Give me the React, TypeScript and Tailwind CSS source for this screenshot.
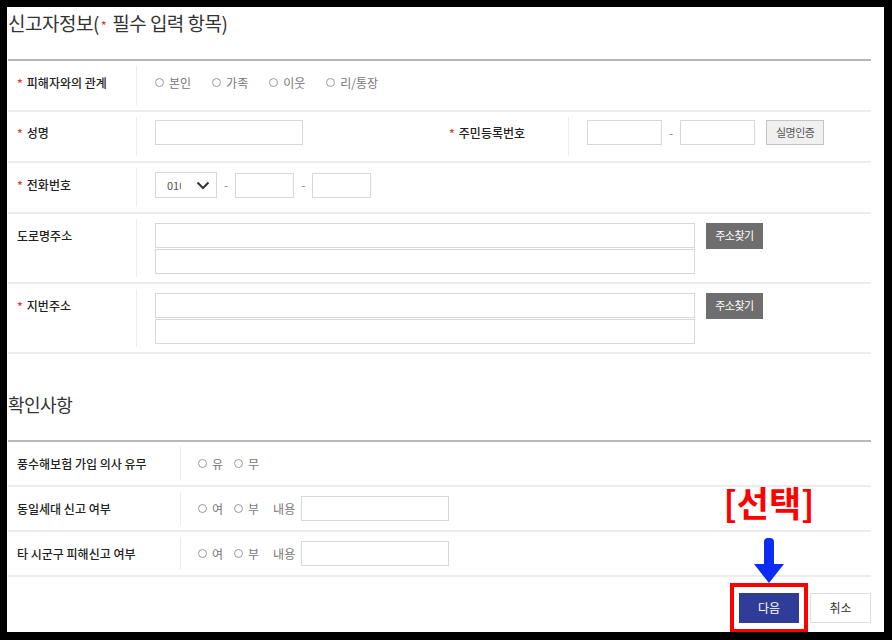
import React from "react";

const Star = () => <span className="text-[#e8382f] text-[12px] mr-[4px]">*</span>;

const Radio = ({ label }: { label: string }) => (
  <span className="flex items-center gap-[5px] text-[12px] text-[#777]">
    <span className="w-[9px] h-[9px] rounded-full border border-[#999]" />
    {label}
  </span>
);

const Label = ({ text, required }: { text: string; required?: boolean }) => (
  <div className="flex items-center h-[25px] pl-[9px] text-[12px] text-[#222] font-medium">
    {required && <Star />}
    {text}
  </div>
);

const Divider = () => <div className="w-px self-stretch my-[5px] bg-[#ececec]" />;

const Input = ({ w }: { w: string }) => <div className={`${w} h-[25px] border border-[#d8d8d8] bg-white`} />;

const Dash = () => <span className="text-[12px] text-[#888] px-[7px]">-</span>;

const FindBtn = () => (
  <div className="w-[57px] h-[26px] bg-[#6e6e6e] text-white text-[11px] flex justify-center pt-[4px] tracking-[-0.5px]">
    주소찾기
  </div>
);

export default function App() {
  return (
    <div className="w-[892px] h-[640px] bg-black pt-[7px] pl-[7px] font-['Noto_Sans_CJK_KR',sans-serif]">
      <div className="w-[877px] h-[625px] bg-white overflow-hidden">
        <div className="w-[863px] ml-[1px]">
          {/* title */}
          <div className="h-[52px] pt-[2px] text-[19px] leading-[28px] text-[#333] tracking-[-0.5px]">
            신고자정보(<span className="text-[#e8382f] text-[13px] mx-[2px]">*</span> 필수 입력 항목)
          </div>

          {/* table 1 */}
          <div className="border-t-2 border-[#b8b8b8]">
            <div className="flex h-[51px] border-b-2 border-[#ececec]">
              <div className="w-[128px] pt-[9px]"><Label text="피해자와의 관계" required /></div>
              <Divider />
              <div className="flex-1 pt-[9px] pl-[18px] flex items-start">
                <div className="h-[25px] flex items-center gap-[21px]">
                  <Radio label="본인" />
                  <Radio label="가족" />
                  <Radio label="이웃" />
                  <Radio label="리/통장" />
                </div>
              </div>
            </div>

            <div className="flex h-[51px] border-b-2 border-[#ececec]">
              <div className="w-[128px] pt-[8px]"><Label text="성명" required /></div>
              <Divider />
              <div className="w-[303px] pt-[8px] pl-[18px]"><Input w="w-[148px]" /></div>
              <div className="w-[128px] pt-[8px]"><Label text="주민등록번호" required /></div>
              <Divider />
              <div className="flex-1 pt-[8px] pl-[18px] flex items-start">
                <div className="flex items-center">
                  <Input w="w-[75px]" />
                  <Dash />
                  <Input w="w-[75px]" />
                  <div className="ml-[11px] w-[58px] h-[25px] bg-[#f0f0f0] border border-[#c4c4c4] text-[11px] text-[#555] flex items-center justify-center tracking-[-0.5px]">
                    실명인증
                  </div>
                </div>
              </div>
            </div>

            <div className="flex h-[51px] border-b-2 border-[#ececec]">
              <div className="w-[128px] pt-[9px]"><Label text="전화번호" required /></div>
              <Divider />
              <div className="flex-1 pt-[9px] pl-[18px] flex items-start">
                <div className="flex items-center">
                  <div className="w-[62px] h-[26px] border border-[#d8d8d8] flex items-center pl-[11px] pr-[6px]">
                    <span className="w-[14px] overflow-hidden whitespace-nowrap text-[11px] text-[#555]">010</span>
                    <svg className="ml-auto" width="14" height="9" viewBox="0 0 14 9">
                      <path d="M1.5 1.5 L7 7 L12.5 1.5" fill="none" stroke="#333" strokeWidth="2" />
                    </svg>
                  </div>
                  <Dash />
                  <Input w="w-[59px]" />
                  <Dash />
                  <Input w="w-[59px]" />
                </div>
              </div>
            </div>

            <div className="flex h-[70px] border-b-2 border-[#ececec]">
              <div className="w-[128px] pt-[9px]"><Label text="도로명주소" /></div>
              <Divider />
              <div className="flex-1 pt-[9px] pl-[18px] flex items-start gap-[11px]">
                <div className="flex flex-col gap-[1px]">
                  <Input w="w-[540px]" />
                  <Input w="w-[540px]" />
                </div>
                <FindBtn />
              </div>
            </div>

            <div className="flex h-[70px] border-b-2 border-[#ececec]">
              <div className="w-[128px] pt-[9px]"><Label text="지번주소" required /></div>
              <Divider />
              <div className="flex-1 pt-[9px] pl-[18px] flex items-start gap-[11px]">
                <div className="flex flex-col gap-[1px]">
                  <Input w="w-[540px]" />
                  <Input w="w-[540px]" />
                </div>
                <FindBtn />
              </div>
            </div>
          </div>

          {/* heading 2 */}
          <div className="h-[86px] pt-[36px] text-[18px] leading-[28px] text-[#333] tracking-[-0.5px]">확인사항</div>

          {/* table 2 */}
          <div className="border-t-2 border-[#b8b8b8]">
            <div className="flex items-center h-[45px] border-b-2 border-[#ececec]">
              <div className="w-[172px]"><Label text="풍수해보험 가입 의사 유무" /></div>
              <Divider />
              <div className="flex-1 pl-[17px] flex items-center gap-[11px]">
                <Radio label="유" />
                <Radio label="무" />
              </div>
            </div>
            {["동일세대 신고 여부", "타 시군구 피해신고 여부"].map((t) => (
              <div key={t} className="flex items-center h-[45px] border-b-2 border-[#ececec]">
                <div className="w-[172px]"><Label text={t} /></div>
                <Divider />
                <div className="flex-1 pl-[17px] flex items-center">
                  <div className="flex items-center gap-[11px]">
                    <Radio label="여" />
                    <Radio label="부" />
                  </div>
                  <span className="ml-[14px] mr-[6px] text-[12px] text-[#777]">내용</span>
                  <Input w="w-[148px]" />
                </div>
              </div>
            ))}
          </div>

          {/* buttons */}
          <div className="flex justify-end gap-[11px] mt-[16px]">
            <div className="relative">
              <div className="w-[60px] h-[30px] bg-[#2f3d98] text-white text-[12px] flex items-center justify-center">다음</div>
              <div className="absolute -left-[9px] -right-[9px] -top-[10px] -bottom-[10px] border-4 border-[#ff0000]" />
              <svg className="absolute left-1/2 -translate-x-1/2 -top-[55px]" width="30" height="45" viewBox="0 0 30 45">
                <rect x="10" y="0" width="10" height="30" rx="4" fill="#0a2cf5" />
                <path d="M0 26 L30 26 L15 45 Z" fill="#0a2cf5" />
              </svg>
              <div className="absolute left-1/2 -translate-x-1/2 -top-[113px] whitespace-nowrap text-[35px] leading-[44px] font-bold text-[#ff0000]">
                [선택]
              </div>
            </div>
            <div className="w-[61px] h-[30px] border border-[#dcdcdc] text-[12px] text-[#333] flex items-center justify-center">취소</div>
          </div>
        </div>
      </div>
    </div>
  );
}
